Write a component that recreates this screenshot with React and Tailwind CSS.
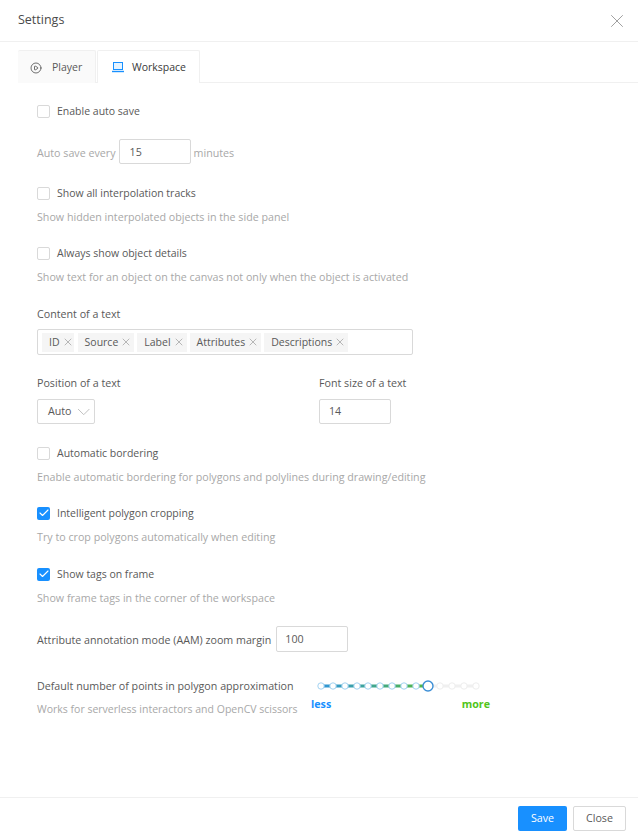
import { X, ChevronDown, Check, CirclePlay } from "lucide-react";

const font = "font-['Open_Sans',sans-serif]";

function Checkbox({ checked, label, className }) {
  return (
    <label className={`flex items-center h-[20px] ${className}`}>
      {checked ? (
        <span className="w-[13px] h-[13px] rounded-[2px] bg-[#1890ff] flex items-center justify-center">
          <Check size={12} color="#fff" strokeWidth={2.2} />
        </span>
      ) : (
        <span className="w-[13px] h-[13px] rounded-[2px] border border-[#d9d9d9] bg-white" />
      )}
      <span className="ml-[7px] pt-[2px] text-[10.5px] text-[#595959]">{label}</span>
    </label>
  );
}

function Hint({ children, className = "mt-[4px] text-[10.7px]" }) {
  return <div className={`h-[20px] leading-[20px] text-[#a8a8a8] ${className}`}>{children}</div>;
}

function Tag({ children, className = "ml-[3px] pr-[2px]" }) {
  return (
    <span className={`flex items-center h-[19px] pl-[7px] bg-[#f5f5f5] text-[10.5px] text-[#595959] ${className}`}>
      <span className="pt-[2px]">{children}</span>
      <X size={12} color="#8c8c8c" strokeWidth={1.2} className="ml-[2px]" />
    </span>
  );
}

function Approximation() {
  const nodes = [321, 333, 345, 357, 368, 380, 392, 404, 416, 440, 452, 464, 476];
  return (
    <div className="w-[190px] h-[44px]">
      <svg width="190" height="20" className="block" viewBox="310 676 190 20">
        <defs>
          <linearGradient id="track" x1="321" x2="428" y1="0" y2="0" gradientUnits="userSpaceOnUse">
            <stop offset="0" stopColor="#2f95d8" />
            <stop offset="1" stopColor="#52b840" />
          </linearGradient>
        </defs>
        <line x1="428" x2="476" y1="686" y2="686" stroke="#f0f0f0" strokeWidth="3" />
        <line x1="321" x2="428" y1="686" y2="686" stroke="url(#track)" strokeWidth="3" />
        {nodes.map((x) => (
          <circle
            key={x}
            cx={x}
            cy="686"
            r="3.2"
            fill="#fff"
            stroke={x < 428 ? "#a3d3f2" : "#eeeeee"}
            strokeWidth="1"
          />
        ))}
        <circle cx="428" cy="686" r="5" fill="#fff" stroke="#3d8fd6" strokeWidth="1.4" />
      </svg>
      <div className="flex justify-between w-[180px] h-[16px] pl-[1px] leading-[16px] font-bold">
        <span className="text-[#1890ff]">less</span>
        <span className="text-[#52c41a]">more</span>
      </div>
    </div>
  );
}

export default function App() {
  return (
    <div className={`${font} w-[638px] h-[838px] bg-white flex flex-col text-[10.7px] text-[#595959]`}>
      <header className="h-[42px] shrink-0 border-b border-[#f0f0f0] flex items-center justify-between pl-[18px] pr-[10px]">
        <h1 className="text-[12.5px] text-[#4a4a4a]">Settings</h1>
        <X size={22} color="#8c8c8c" strokeWidth={0.9} />
      </header>

      <main className="flex-1 pt-[8px]">
        <div className="flex h-[33px] ml-[18px] border-b border-[#f0f0f0] text-[#595959] text-[10.5px]">
          <div className="flex items-center w-[78px] h-[33px] pl-[12px] pt-[1px] bg-[#fafafa] border border-b-0 border-l-0 border-[#f0f0f0] rounded-t-[2px]">
            <CirclePlay size={12} color="#404040" strokeWidth={1.5} />
            <span className="ml-[10px]">Player</span>
          </div>
          <div className="flex items-center w-[103px] h-[33px] ml-[1px] pl-[14px] pt-[1px] bg-white border border-b-0 border-[#f0f0f0] rounded-t-[2px] -mb-px">
            <svg width="12" height="11" viewBox="0 0 12 11" fill="none">
              <rect x="1.5" y="0.5" width="9" height="7" fill="#e6f4ff" stroke="#1890ff" />
              <path d="M0 9.5h12" stroke="#1890ff" strokeWidth="1.4" />
            </svg>
            <span className="ml-[8px] text-[#3a3a3a]">Workspace</span>
          </div>
        </div>

        <div className="pl-[37px] pt-[18px]">
          <Checkbox label="Enable auto save" />

          <div className="flex items-center mt-[18px] h-[25px] text-[#a8a8a8]">
            <span className="pt-[3px]">Auto save every</span>
            <span className="w-[72px] h-[25px] ml-[3px] mr-[3px] border border-[#d9d9d9] rounded-[2px] pl-[10px] leading-[24px] text-[#595959]">15</span>
            <span className="pt-[3px]">minutes</span>
          </div>

          <Checkbox label="Show all interpolation tracks" className="mt-[19px]" />
          <Hint>Show hidden interpolated objects in the side panel</Hint>

          <Checkbox label="Always show object details" className="mt-[16px]" />
          <Hint>Show text for an object on the canvas not only when the object is activated</Hint>

          <div className="h-[20px] leading-[20px] mt-[17px]">Content of a text</div>
          <div className="flex items-center w-[376px] h-[26px] mt-[5px] pl-[4px] border border-[#d9d9d9] rounded-[2px]">
            <Tag className="">ID</Tag>
            <Tag className="ml-[4px] pr-[2px]">Source</Tag>
            <Tag>Label</Tag>
            <Tag>Attributes</Tag>
            <Tag>Descriptions</Tag>
          </div>

          <div className="flex mt-[18px]">
            <div className="w-[282px]">
              <div className="h-[20px] leading-[20px]">Position of a text</div>
              <div className="flex items-center w-[58px] h-[25px] mt-[6px] pl-[10px] border border-[#d9d9d9] rounded-[2px]">
                Auto
                <ChevronDown size={22} color="#bfbfbf" strokeWidth={1.1} className="ml-[1px]" />
              </div>
            </div>
            <div>
              <div className="h-[20px] leading-[20px]">Font size of a text</div>
              <div className="w-[72px] h-[25px] mt-[6px] pl-[9px] border border-[#d9d9d9] rounded-[2px] leading-[23px]">14</div>
            </div>
          </div>

          <Checkbox label="Automatic bordering" className="mt-[19px]" />
          <Hint>Enable automatic bordering for polygons and polylines during drawing/editing</Hint>

          <Checkbox checked label="Intelligent polygon cropping" className="mt-[16px]" />
          <Hint>Try to crop polygons automatically when editing</Hint>

          <Checkbox checked label="Show tags on frame" className="mt-[17px]" />
          <Hint>Show frame tags in the corner of the workspace</Hint>

          <div className="flex items-center h-[26px] mt-[18px]">
            <span className="pt-[2px]">Attribute annotation mode (AAM) zoom margin</span>
            <span className="w-[72px] h-[26px] ml-[5px] pl-[8px] border border-[#d9d9d9] rounded-[2px] leading-[24px]">100</span>
          </div>

          <div className="flex mt-[24px]">
            <div className="w-[273px]">
              <div className="h-[20px] leading-[20px]">Default number of points in polygon approximation</div>
              <Hint className="mt-[3px] text-[10.5px]">Works for serverless interactors and OpenCV scissors</Hint>
            </div>
            <Approximation />
          </div>
        </div>
      </main>

      <footer className="h-[41px] shrink-0 border-t border-[#f0f0f0] flex justify-end items-start pt-[8px] pr-[12px]">
        <button className="w-[49px] h-[25px] bg-[#1890ff] text-white rounded-[2px]">Save</button>
        <button className="w-[53px] h-[25px] ml-[6px] border border-[#d9d9d9] rounded-[2px] text-[#595959]">Close</button>
      </footer>
    </div>
  );
}
